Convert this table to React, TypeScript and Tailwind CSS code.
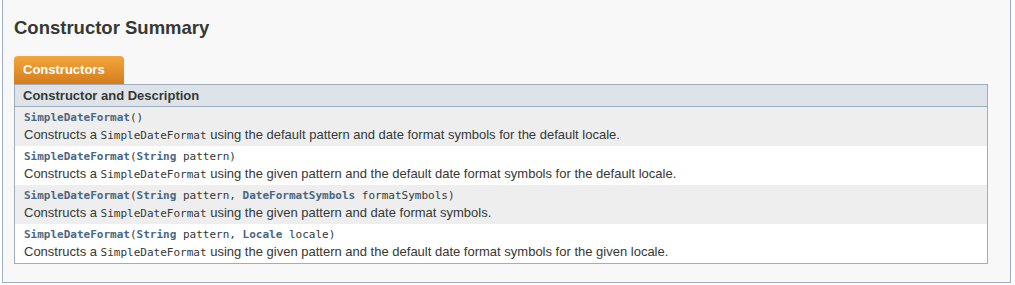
import React from "react";

const mono = "font-['DejaVu_Sans_Mono','Liberation_Mono',monospace] text-[11px]";
const sans = "font-['Liberation_Sans',Arial,sans-serif]";

function Link({ children }: { children: React.ReactNode }) {
  return <span className="font-bold text-[#4a6782]">{children}</span>;
}

function Code({ children }: { children: React.ReactNode }) {
  return <span className={mono}>{children}</span>;
}

type Row = { sig: React.ReactNode; desc: React.ReactNode };

const rows: Row[] = [
  {
    sig: (
      <>
        <Link>SimpleDateFormat</Link>()
      </>
    ),
    desc: (
      <>
        Constructs a <Code>SimpleDateFormat</Code> using the default pattern and date format symbols for the default locale.
      </>
    ),
  },
  {
    sig: (
      <>
        <Link>SimpleDateFormat</Link>(<Link>String</Link> pattern)
      </>
    ),
    desc: (
      <>
        Constructs a <Code>SimpleDateFormat</Code> using the given pattern and the default date format symbols for the default locale.
      </>
    ),
  },
  {
    sig: (
      <>
        <Link>SimpleDateFormat</Link>(<Link>String</Link> pattern, <Link>DateFormatSymbols</Link> formatSymbols)
      </>
    ),
    desc: (
      <>
        Constructs a <Code>SimpleDateFormat</Code> using the given pattern and date format symbols.
      </>
    ),
  },
  {
    sig: (
      <>
        <Link>SimpleDateFormat</Link>(<Link>String</Link> pattern, <Link>Locale</Link> locale)
      </>
    ),
    desc: (
      <>
        Constructs a <Code>SimpleDateFormat</Code> using the given pattern and the default date format symbols for the given locale.
      </>
    ),
  },
];

export default function App() {
  return (
    <div className={`w-[1015px] h-[285px] bg-white ${sans} text-[#353833]`}>
      <div className="ml-[2px] w-[1009px] h-[283px] bg-[#f8f8f8] border-x border-b border-[#9eadc0] pl-[11px] pr-[22px]">
        <h3 className="pt-[16px] h-[56px] text-[18.5px] leading-[24px] font-bold text-[#353833]">
          Constructor Summary
        </h3>
        <div className="flex">
          <div className="w-[110px] h-[28px] rounded-t-[4px] bg-gradient-to-b from-[#f3a63c] to-[#d67d1b] pl-[9px] pt-[6px] text-[13px] leading-[16px] font-bold text-white">
            Constructors
          </div>
        </div>
        <div className="border border-[#9eadc0] bg-white">
          <div className="h-[22px] bg-[#dee3e9] border-b border-[#9eadc0] pl-[8px] text-[13px] leading-[21px] font-bold text-[#353833]">
            Constructor and Description
          </div>
          {rows.map((r, i) => (
            <div
              key={i}
              className={`h-[39px] pl-[9px] pt-[3px] ${i % 2 === 0 ? "bg-[#eeeeef]" : "bg-white"}`}
            >
              <div className={`${mono} leading-[16px] h-[16px] whitespace-pre`}>{r.sig}</div>
              <div className="text-[13px] leading-[18px] h-[18px] whitespace-nowrap">{r.desc}</div>
            </div>
          ))}
        </div>
      </div>
    </div>
  );
}
